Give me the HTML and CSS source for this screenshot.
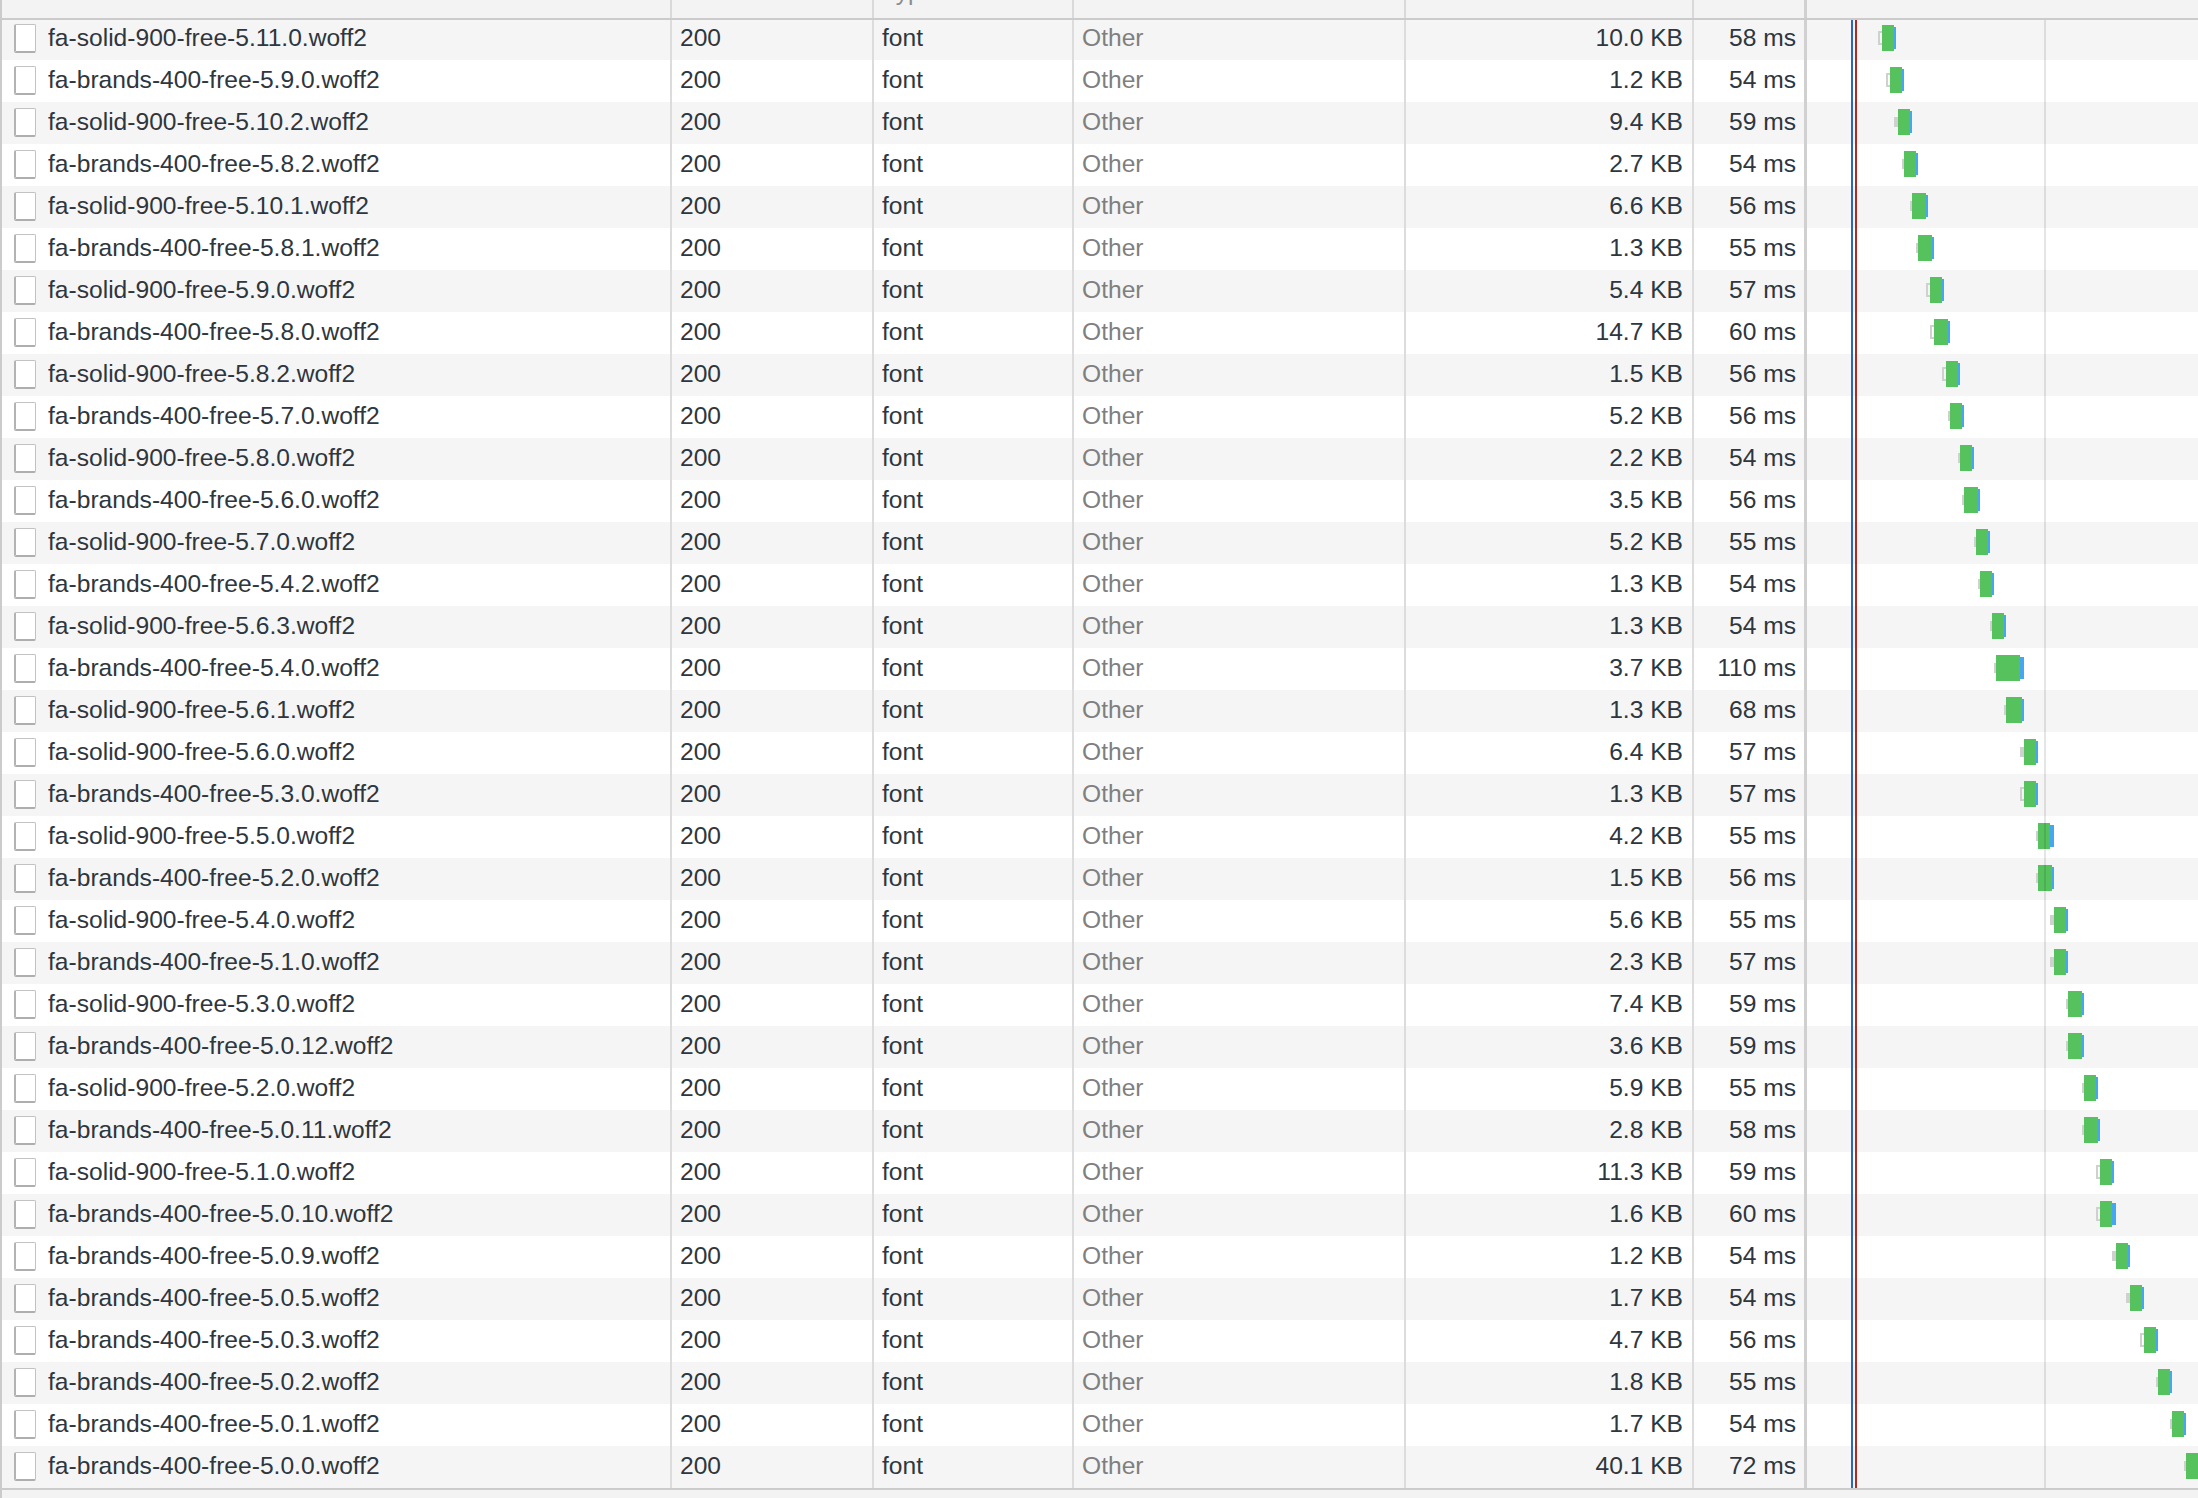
FILE: index.html
```html
<!DOCTYPE html>
<html lang="en">
<head>
<meta charset="utf-8">
<title>Network</title>
<link rel="stylesheet" href="styles.css">
</head>
<body>
<div class="grid">
  <div class="hrow">
    <div class="hcell hname"><span>Name</span></div>
    <div class="hcell"><span>Status</span></div>
    <div class="hcell"><span>Type</span></div>
    <div class="hcell"><span>Initiator</span></div>
    <div class="hcell"><span>Size</span></div>
    <div class="hcell htime"><span>Time</span></div>
    <div class="hcell hwf"><span>Waterfall</span></div>
  </div>
  <div class="rows">
    <div class="row"><div class="cell name"><i class="ficon"></i><span>fa-solid-900-free-5.11.0.woff2</span></div><div class="cell">200</div><div class="cell">font</div><div class="cell init">Other</div><div class="cell size">10.0 KB</div><div class="cell time">58 ms</div><div class="cell wf"><div class="bar" style="left:71px"><i class="stub h" style="width:4px"></i><i class="recv" style="width:12px"></i><i class="dl" style="width:2px"></i></div></div></div>
    <div class="row"><div class="cell name"><i class="ficon"></i><span>fa-brands-400-free-5.9.0.woff2</span></div><div class="cell">200</div><div class="cell">font</div><div class="cell init">Other</div><div class="cell size">1.2 KB</div><div class="cell time">54 ms</div><div class="cell wf"><div class="bar" style="left:79px"><i class="stub h" style="width:4px"></i><i class="recv" style="width:12px"></i><i class="dl" style="width:2px"></i></div></div></div>
    <div class="row"><div class="cell name"><i class="ficon"></i><span>fa-solid-900-free-5.10.2.woff2</span></div><div class="cell">200</div><div class="cell">font</div><div class="cell init">Other</div><div class="cell size">9.4 KB</div><div class="cell time">59 ms</div><div class="cell wf"><div class="bar" style="left:87px"><i class="stub" style="width:4px"></i><i class="recv" style="width:12px"></i><i class="dl" style="width:2px"></i></div></div></div>
    <div class="row"><div class="cell name"><i class="ficon"></i><span>fa-brands-400-free-5.8.2.woff2</span></div><div class="cell">200</div><div class="cell">font</div><div class="cell init">Other</div><div class="cell size">2.7 KB</div><div class="cell time">54 ms</div><div class="cell wf"><div class="bar" style="left:95px"><i class="stub" style="width:2px"></i><i class="recv" style="width:12px"></i><i class="dl" style="width:2px"></i></div></div></div>
    <div class="row"><div class="cell name"><i class="ficon"></i><span>fa-solid-900-free-5.10.1.woff2</span></div><div class="cell">200</div><div class="cell">font</div><div class="cell init">Other</div><div class="cell size">6.6 KB</div><div class="cell time">56 ms</div><div class="cell wf"><div class="bar" style="left:103px"><i class="stub" style="width:2px"></i><i class="recv" style="width:14px"></i><i class="dl" style="width:2px"></i></div></div></div>
    <div class="row"><div class="cell name"><i class="ficon"></i><span>fa-brands-400-free-5.8.1.woff2</span></div><div class="cell">200</div><div class="cell">font</div><div class="cell init">Other</div><div class="cell size">1.3 KB</div><div class="cell time">55 ms</div><div class="cell wf"><div class="bar" style="left:109px"><i class="stub" style="width:2px"></i><i class="recv" style="width:14px"></i><i class="dl" style="width:2px"></i></div></div></div>
    <div class="row"><div class="cell name"><i class="ficon"></i><span>fa-solid-900-free-5.9.0.woff2</span></div><div class="cell">200</div><div class="cell">font</div><div class="cell init">Other</div><div class="cell size">5.4 KB</div><div class="cell time">57 ms</div><div class="cell wf"><div class="bar" style="left:119px"><i class="stub h" style="width:4px"></i><i class="recv" style="width:12px"></i><i class="dl" style="width:2px"></i></div></div></div>
    <div class="row"><div class="cell name"><i class="ficon"></i><span>fa-brands-400-free-5.8.0.woff2</span></div><div class="cell">200</div><div class="cell">font</div><div class="cell init">Other</div><div class="cell size">14.7 KB</div><div class="cell time">60 ms</div><div class="cell wf"><div class="bar" style="left:123px"><i class="stub h" style="width:4px"></i><i class="recv" style="width:14px"></i><i class="dl" style="width:2px"></i></div></div></div>
    <div class="row"><div class="cell name"><i class="ficon"></i><span>fa-solid-900-free-5.8.2.woff2</span></div><div class="cell">200</div><div class="cell">font</div><div class="cell init">Other</div><div class="cell size">1.5 KB</div><div class="cell time">56 ms</div><div class="cell wf"><div class="bar" style="left:135px"><i class="stub h" style="width:4px"></i><i class="recv" style="width:12px"></i><i class="dl" style="width:2px"></i></div></div></div>
    <div class="row"><div class="cell name"><i class="ficon"></i><span>fa-brands-400-free-5.7.0.woff2</span></div><div class="cell">200</div><div class="cell">font</div><div class="cell init">Other</div><div class="cell size">5.2 KB</div><div class="cell time">56 ms</div><div class="cell wf"><div class="bar" style="left:141px"><i class="stub" style="width:2px"></i><i class="recv" style="width:12px"></i><i class="dl" style="width:2px"></i></div></div></div>
    <div class="row"><div class="cell name"><i class="ficon"></i><span>fa-solid-900-free-5.8.0.woff2</span></div><div class="cell">200</div><div class="cell">font</div><div class="cell init">Other</div><div class="cell size">2.2 KB</div><div class="cell time">54 ms</div><div class="cell wf"><div class="bar" style="left:151px"><i class="stub" style="width:2px"></i><i class="recv" style="width:12px"></i><i class="dl" style="width:2px"></i></div></div></div>
    <div class="row"><div class="cell name"><i class="ficon"></i><span>fa-brands-400-free-5.6.0.woff2</span></div><div class="cell">200</div><div class="cell">font</div><div class="cell init">Other</div><div class="cell size">3.5 KB</div><div class="cell time">56 ms</div><div class="cell wf"><div class="bar" style="left:155px"><i class="stub" style="width:2px"></i><i class="recv" style="width:14px"></i><i class="dl" style="width:2px"></i></div></div></div>
    <div class="row"><div class="cell name"><i class="ficon"></i><span>fa-solid-900-free-5.7.0.woff2</span></div><div class="cell">200</div><div class="cell">font</div><div class="cell init">Other</div><div class="cell size">5.2 KB</div><div class="cell time">55 ms</div><div class="cell wf"><div class="bar" style="left:167px"><i class="stub" style="width:2px"></i><i class="recv" style="width:12px"></i><i class="dl" style="width:2px"></i></div></div></div>
    <div class="row"><div class="cell name"><i class="ficon"></i><span>fa-brands-400-free-5.4.2.woff2</span></div><div class="cell">200</div><div class="cell">font</div><div class="cell init">Other</div><div class="cell size">1.3 KB</div><div class="cell time">54 ms</div><div class="cell wf"><div class="bar" style="left:171px"><i class="stub" style="width:2px"></i><i class="recv" style="width:12px"></i><i class="dl" style="width:2px"></i></div></div></div>
    <div class="row"><div class="cell name"><i class="ficon"></i><span>fa-solid-900-free-5.6.3.woff2</span></div><div class="cell">200</div><div class="cell">font</div><div class="cell init">Other</div><div class="cell size">1.3 KB</div><div class="cell time">54 ms</div><div class="cell wf"><div class="bar" style="left:183px"><i class="stub" style="width:2px"></i><i class="recv" style="width:12px"></i><i class="dl" style="width:2px"></i></div></div></div>
    <div class="row"><div class="cell name"><i class="ficon"></i><span>fa-brands-400-free-5.4.0.woff2</span></div><div class="cell">200</div><div class="cell">font</div><div class="cell init">Other</div><div class="cell size">3.7 KB</div><div class="cell time">110 ms</div><div class="cell wf"><div class="bar" style="left:187px"><i class="stub" style="width:2px"></i><i class="recv" style="width:24px"></i><i class="dl" style="width:4px"></i></div></div></div>
    <div class="row"><div class="cell name"><i class="ficon"></i><span>fa-solid-900-free-5.6.1.woff2</span></div><div class="cell">200</div><div class="cell">font</div><div class="cell init">Other</div><div class="cell size">1.3 KB</div><div class="cell time">68 ms</div><div class="cell wf"><div class="bar" style="left:197px"><i class="stub" style="width:2px"></i><i class="recv" style="width:16px"></i><i class="dl" style="width:2px"></i></div></div></div>
    <div class="row"><div class="cell name"><i class="ficon"></i><span>fa-solid-900-free-5.6.0.woff2</span></div><div class="cell">200</div><div class="cell">font</div><div class="cell init">Other</div><div class="cell size">6.4 KB</div><div class="cell time">57 ms</div><div class="cell wf"><div class="bar" style="left:213px"><i class="stub" style="width:4px"></i><i class="recv" style="width:12px"></i><i class="dl" style="width:2px"></i></div></div></div>
    <div class="row"><div class="cell name"><i class="ficon"></i><span>fa-brands-400-free-5.3.0.woff2</span></div><div class="cell">200</div><div class="cell">font</div><div class="cell init">Other</div><div class="cell size">1.3 KB</div><div class="cell time">57 ms</div><div class="cell wf"><div class="bar" style="left:213px"><i class="stub h" style="width:4px"></i><i class="recv" style="width:12px"></i><i class="dl" style="width:2px"></i></div></div></div>
    <div class="row"><div class="cell name"><i class="ficon"></i><span>fa-solid-900-free-5.5.0.woff2</span></div><div class="cell">200</div><div class="cell">font</div><div class="cell init">Other</div><div class="cell size">4.2 KB</div><div class="cell time">55 ms</div><div class="cell wf"><div class="bar" style="left:229px"><i class="stub" style="width:2px"></i><i class="recv" style="width:12px"></i><i class="dl" style="width:4px"></i></div></div></div>
    <div class="row"><div class="cell name"><i class="ficon"></i><span>fa-brands-400-free-5.2.0.woff2</span></div><div class="cell">200</div><div class="cell">font</div><div class="cell init">Other</div><div class="cell size">1.5 KB</div><div class="cell time">56 ms</div><div class="cell wf"><div class="bar" style="left:229px"><i class="stub" style="width:2px"></i><i class="recv" style="width:14px"></i><i class="dl" style="width:2px"></i></div></div></div>
    <div class="row"><div class="cell name"><i class="ficon"></i><span>fa-solid-900-free-5.4.0.woff2</span></div><div class="cell">200</div><div class="cell">font</div><div class="cell init">Other</div><div class="cell size">5.6 KB</div><div class="cell time">55 ms</div><div class="cell wf"><div class="bar" style="left:243px"><i class="stub" style="width:4px"></i><i class="recv" style="width:12px"></i><i class="dl" style="width:2px"></i></div></div></div>
    <div class="row"><div class="cell name"><i class="ficon"></i><span>fa-brands-400-free-5.1.0.woff2</span></div><div class="cell">200</div><div class="cell">font</div><div class="cell init">Other</div><div class="cell size">2.3 KB</div><div class="cell time">57 ms</div><div class="cell wf"><div class="bar" style="left:243px"><i class="stub" style="width:4px"></i><i class="recv" style="width:12px"></i><i class="dl" style="width:2px"></i></div></div></div>
    <div class="row"><div class="cell name"><i class="ficon"></i><span>fa-solid-900-free-5.3.0.woff2</span></div><div class="cell">200</div><div class="cell">font</div><div class="cell init">Other</div><div class="cell size">7.4 KB</div><div class="cell time">59 ms</div><div class="cell wf"><div class="bar" style="left:259px"><i class="stub" style="width:2px"></i><i class="recv" style="width:14px"></i><i class="dl" style="width:2px"></i></div></div></div>
    <div class="row"><div class="cell name"><i class="ficon"></i><span>fa-brands-400-free-5.0.12.woff2</span></div><div class="cell">200</div><div class="cell">font</div><div class="cell init">Other</div><div class="cell size">3.6 KB</div><div class="cell time">59 ms</div><div class="cell wf"><div class="bar" style="left:259px"><i class="stub" style="width:2px"></i><i class="recv" style="width:14px"></i><i class="dl" style="width:2px"></i></div></div></div>
    <div class="row"><div class="cell name"><i class="ficon"></i><span>fa-solid-900-free-5.2.0.woff2</span></div><div class="cell">200</div><div class="cell">font</div><div class="cell init">Other</div><div class="cell size">5.9 KB</div><div class="cell time">55 ms</div><div class="cell wf"><div class="bar" style="left:275px"><i class="stub" style="width:2px"></i><i class="recv" style="width:12px"></i><i class="dl" style="width:2px"></i></div></div></div>
    <div class="row"><div class="cell name"><i class="ficon"></i><span>fa-brands-400-free-5.0.11.woff2</span></div><div class="cell">200</div><div class="cell">font</div><div class="cell init">Other</div><div class="cell size">2.8 KB</div><div class="cell time">58 ms</div><div class="cell wf"><div class="bar" style="left:275px"><i class="stub" style="width:2px"></i><i class="recv" style="width:14px"></i><i class="dl" style="width:2px"></i></div></div></div>
    <div class="row"><div class="cell name"><i class="ficon"></i><span>fa-solid-900-free-5.1.0.woff2</span></div><div class="cell">200</div><div class="cell">font</div><div class="cell init">Other</div><div class="cell size">11.3 KB</div><div class="cell time">59 ms</div><div class="cell wf"><div class="bar" style="left:289px"><i class="stub h" style="width:4px"></i><i class="recv" style="width:12px"></i><i class="dl" style="width:2px"></i></div></div></div>
    <div class="row"><div class="cell name"><i class="ficon"></i><span>fa-brands-400-free-5.0.10.woff2</span></div><div class="cell">200</div><div class="cell">font</div><div class="cell init">Other</div><div class="cell size">1.6 KB</div><div class="cell time">60 ms</div><div class="cell wf"><div class="bar" style="left:289px"><i class="stub h" style="width:4px"></i><i class="recv" style="width:12px"></i><i class="dl" style="width:4px"></i></div></div></div>
    <div class="row"><div class="cell name"><i class="ficon"></i><span>fa-brands-400-free-5.0.9.woff2</span></div><div class="cell">200</div><div class="cell">font</div><div class="cell init">Other</div><div class="cell size">1.2 KB</div><div class="cell time">54 ms</div><div class="cell wf"><div class="bar" style="left:305px"><i class="stub" style="width:4px"></i><i class="recv" style="width:12px"></i><i class="dl" style="width:2px"></i></div></div></div>
    <div class="row"><div class="cell name"><i class="ficon"></i><span>fa-brands-400-free-5.0.5.woff2</span></div><div class="cell">200</div><div class="cell">font</div><div class="cell init">Other</div><div class="cell size">1.7 KB</div><div class="cell time">54 ms</div><div class="cell wf"><div class="bar" style="left:319px"><i class="stub" style="width:4px"></i><i class="recv" style="width:12px"></i><i class="dl" style="width:2px"></i></div></div></div>
    <div class="row"><div class="cell name"><i class="ficon"></i><span>fa-brands-400-free-5.0.3.woff2</span></div><div class="cell">200</div><div class="cell">font</div><div class="cell init">Other</div><div class="cell size">4.7 KB</div><div class="cell time">56 ms</div><div class="cell wf"><div class="bar" style="left:333px"><i class="stub h" style="width:4px"></i><i class="recv" style="width:12px"></i><i class="dl" style="width:2px"></i></div></div></div>
    <div class="row"><div class="cell name"><i class="ficon"></i><span>fa-brands-400-free-5.0.2.woff2</span></div><div class="cell">200</div><div class="cell">font</div><div class="cell init">Other</div><div class="cell size">1.8 KB</div><div class="cell time">55 ms</div><div class="cell wf"><div class="bar" style="left:349px"><i class="stub" style="width:2px"></i><i class="recv" style="width:12px"></i><i class="dl" style="width:2px"></i></div></div></div>
    <div class="row"><div class="cell name"><i class="ficon"></i><span>fa-brands-400-free-5.0.1.woff2</span></div><div class="cell">200</div><div class="cell">font</div><div class="cell init">Other</div><div class="cell size">1.7 KB</div><div class="cell time">54 ms</div><div class="cell wf"><div class="bar" style="left:363px"><i class="stub" style="width:2px"></i><i class="recv" style="width:12px"></i><i class="dl" style="width:2px"></i></div></div></div>
    <div class="row"><div class="cell name"><i class="ficon"></i><span>fa-brands-400-free-5.0.0.woff2</span></div><div class="cell">200</div><div class="cell">font</div><div class="cell init">Other</div><div class="cell size">40.1 KB</div><div class="cell time">72 ms</div><div class="cell wf"><div class="bar" style="left:377px"><i class="stub" style="width:2px"></i><i class="recv" style="width:16px"></i><i class="dl" style="width:2px"></i></div></div></div>
  </div>
  <div class="foot"></div>
</div>
</body>
</html>
```

FILE: styles.css
```css
html, body {
  margin: 0;
  padding: 0;
}

body {
  width: 2198px;
  height: 1498px;
  overflow: hidden;
  background: #f3f3f3;
  font-family: "Liberation Sans", Arial, sans-serif;
  font-size: 24.6px;
  color: #2e363e;
}

.grid {
  border-left: 2px solid #cbcbcb;
  height: 1498px;
  box-sizing: border-box;
}

.hrow,
.row {
  display: grid;
  grid-template-columns: 670px 202px 200px 332px 288px 113px 1fr;
}

.hrow {
  height: 18px;
  background: #f3f3f3;
  border-bottom: 2px solid #cbcbcb;
  margin-bottom: -2px;
  position: relative;
  z-index: 3;
}

.hcell {
  overflow: hidden;
  border-right: 2px solid #d9d9d9;
  padding-left: 8px;
  color: #8a8e93;
}

.hcell span {
  display: block;
  line-height: 30px;
  margin-top: -23px;
  white-space: nowrap;
}

.hname {
  padding-left: 12px;
}

.htime {
  border-right: 3px solid #d0d0d0;
}

.hwf {
  border-right: none;
}

.row {
  height: 42px;
  background: #ffffff;
}

.rows .row:nth-child(odd) {
  background: #f5f5f5;
}

.cell {
  border-right: 2px solid #dcdcdc;
  line-height: 40px;
  padding: 0 8px 2px 8px;
  white-space: nowrap;
  overflow: hidden;
}

.name {
  display: flex;
  align-items: center;
  gap: 12px;
  padding-left: 12px;
}

.ficon {
  flex: none;
  display: block;
  width: 22px;
  height: 29px;
  box-sizing: border-box;
  background: #ffffff;
  border: 1px solid #c2c2c2;
  border-left: 2px solid #b3b3b3;
  border-bottom: 2px solid #aeaeae;
  border-radius: 2px;
}

.init {
  color: #7f7f7f;
}

.size {
  text-align: right;
  padding-right: 9px;
}

.time {
  text-align: right;
  padding-right: 8px;
  border-right: 3px solid #d0d0d0;
}

.wf {
  position: relative;
  border-right: none;
  padding: 0;
  background-image: linear-gradient(to right,
    transparent 44px, #2a66cb 44px, #2a66cb 46px,
    transparent 46px, transparent 48px,
    #b02a21 48px, #b02a21 50px, transparent 50px);
  background-repeat: no-repeat;
}

.wf::after {
  content: "";
  position: absolute;
  left: 237px;
  top: 0;
  bottom: 0;
  width: 2px;
  background: rgba(0, 0, 0, 0.1);
  z-index: 2;
}

.bar {
  position: absolute;
  top: 7px;
  height: 26px;
  display: flex;
  align-items: center;
}

.bar i {
  display: block;
  flex: none;
}

.stub {
  height: 10px;
  background: #d0d0d0;
}

.stub.h {
  height: 14px;
  box-sizing: border-box;
  background: transparent;
  border: 2px solid #d0d0d0;
  border-right: none;
}

.recv {
  height: 26px;
  background: #56c25e;
}

.dl {
  height: 22px;
  background: #45a6f2;
}

.foot {
  height: 8px;
  background: #f3f3f3;
  border-top: 2px solid #cbcbcb;
}
```
